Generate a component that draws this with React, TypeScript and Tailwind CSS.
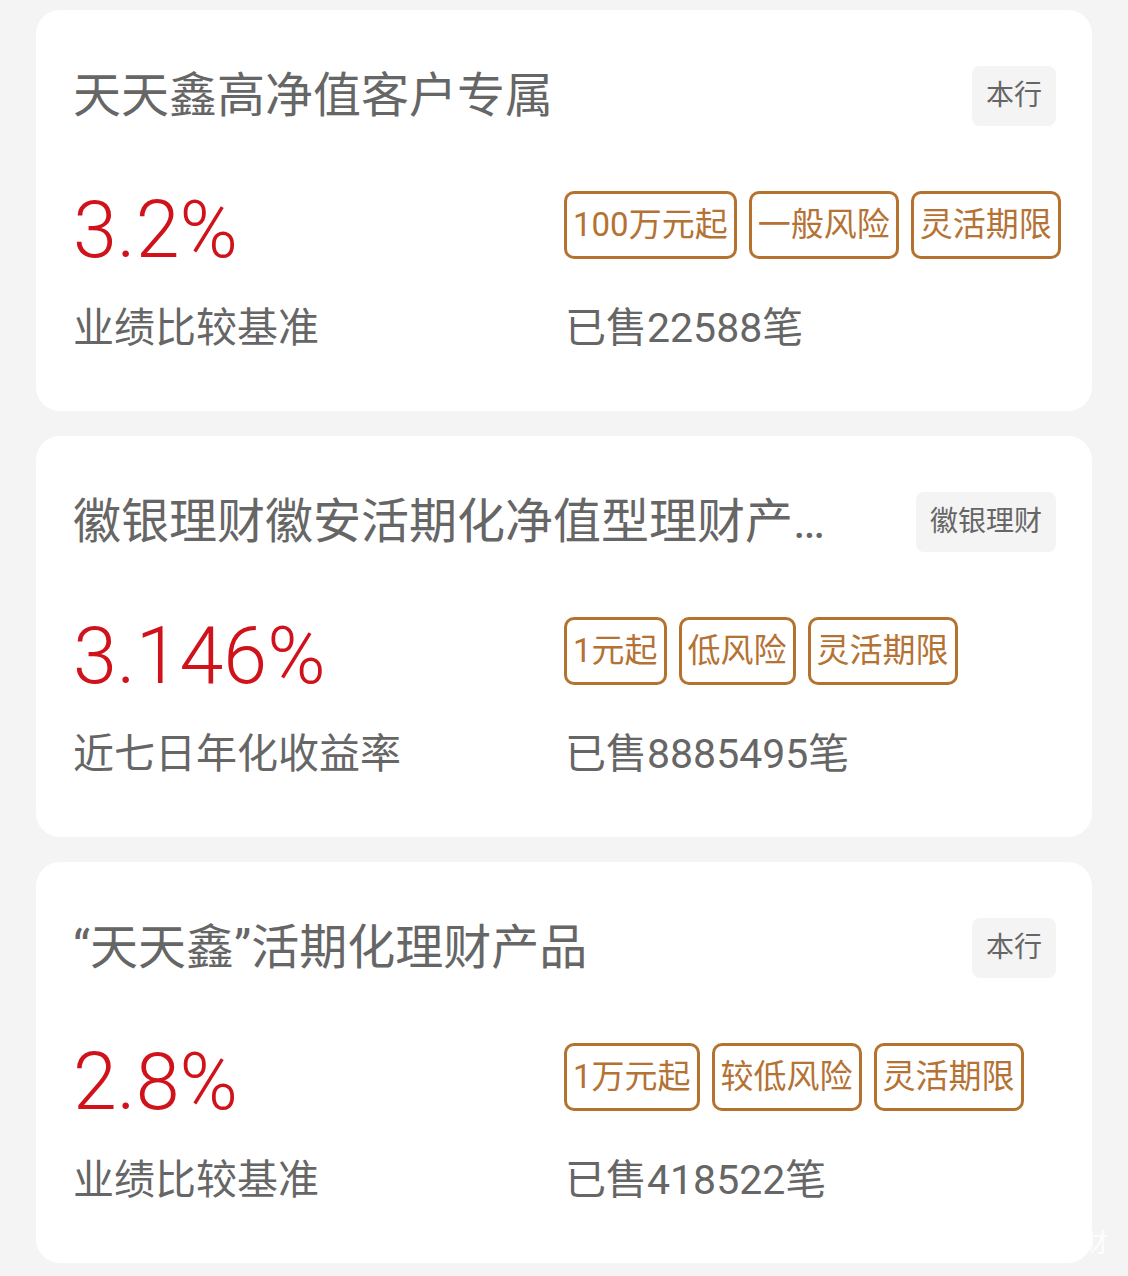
// Wealth product list — three cards, each with title, issuer badge, rate, tags and sales count.

type Product = {
  title: string;
  issuer: string;
  rate: string;
  rateLabel: string;
  tags: string[];
  sold: string;
};

const PRODUCTS: Product[] = [
  {
    title: "天天鑫高净值客户专属",
    issuer: "本行",
    rate: "3.2%",
    rateLabel: "业绩比较基准",
    tags: ["100万元起", "一般风险", "灵活期限"],
    sold: "已售22588笔",
  },
  {
    title: "徽银理财徽安活期化净值型理财产品A",
    issuer: "徽银理财",
    rate: "3.146%",
    rateLabel: "近七日年化收益率",
    tags: ["1元起", "低风险", "灵活期限"],
    sold: "已售8885495笔",
  },
  {
    title: "“天天鑫”活期化理财产品",
    issuer: "本行",
    rate: "2.8%",
    rateLabel: "业绩比较基准",
    tags: ["1万元起", "较低风险", "灵活期限"],
    sold: "已售418522笔",
  },
];

export default function App() {
  return (
    <div
      className="relative min-h-[1276px] bg-[#f4f4f4] pt-[10px] pb-[13px] flex flex-col gap-[25px] px-[36px]"
      style={{ fontFamily: 'Roboto, "Noto Sans CJK SC", sans-serif' }}
    >
      {PRODUCTS.map((p) => (
        <Card key={p.title} product={p} />
      ))}
      {/* faint watermark in the corner */}
      <span className="absolute right-[20px] bottom-[20px] text-[26px] leading-none text-white/80">
        财
      </span>
    </div>
  );
}

function Card({ product }: { product: Product }) {
  return (
    <div className="bg-white rounded-[24px] h-[401px] pl-[37px] pr-[36px] pt-[56px]">
      <div className="flex items-center justify-between h-[60px]">
        <div className="max-w-[760px] min-w-0 truncate text-[48px] leading-[60px] text-[#666666]">
          {product.title}
        </div>
        <span className="shrink-0 h-[60px] px-[14px] flex items-center rounded-[8px] bg-[#f4f4f4] text-[28px] text-[#666666]">
          {product.issuer}
        </span>
      </div>

      <div className="grid grid-cols-[491px_1fr] mt-[64px] items-start">
        <div className="text-[79px] leading-[80px] text-[#d0121b] font-light">
          {product.rate}
        </div>
        <div className="flex gap-[12px] pt-[1px]">
          {product.tags.map((t) => (
            <span
              key={t}
              className="shrink-0 whitespace-nowrap h-[68px] px-[6px] flex items-center rounded-[10px] border-[3px] border-[#b5722f] text-[33px] text-[#b47234]"
            >
              {t}
            </span>
          ))}
        </div>
      </div>

      <div className="grid grid-cols-[491px_1fr] mt-[30px] text-[41px] leading-[56px] text-[#666666]">
        <div>{product.rateLabel}</div>
        <div className="pl-[1px]">{product.sold}</div>
      </div>
    </div>
  );
}
